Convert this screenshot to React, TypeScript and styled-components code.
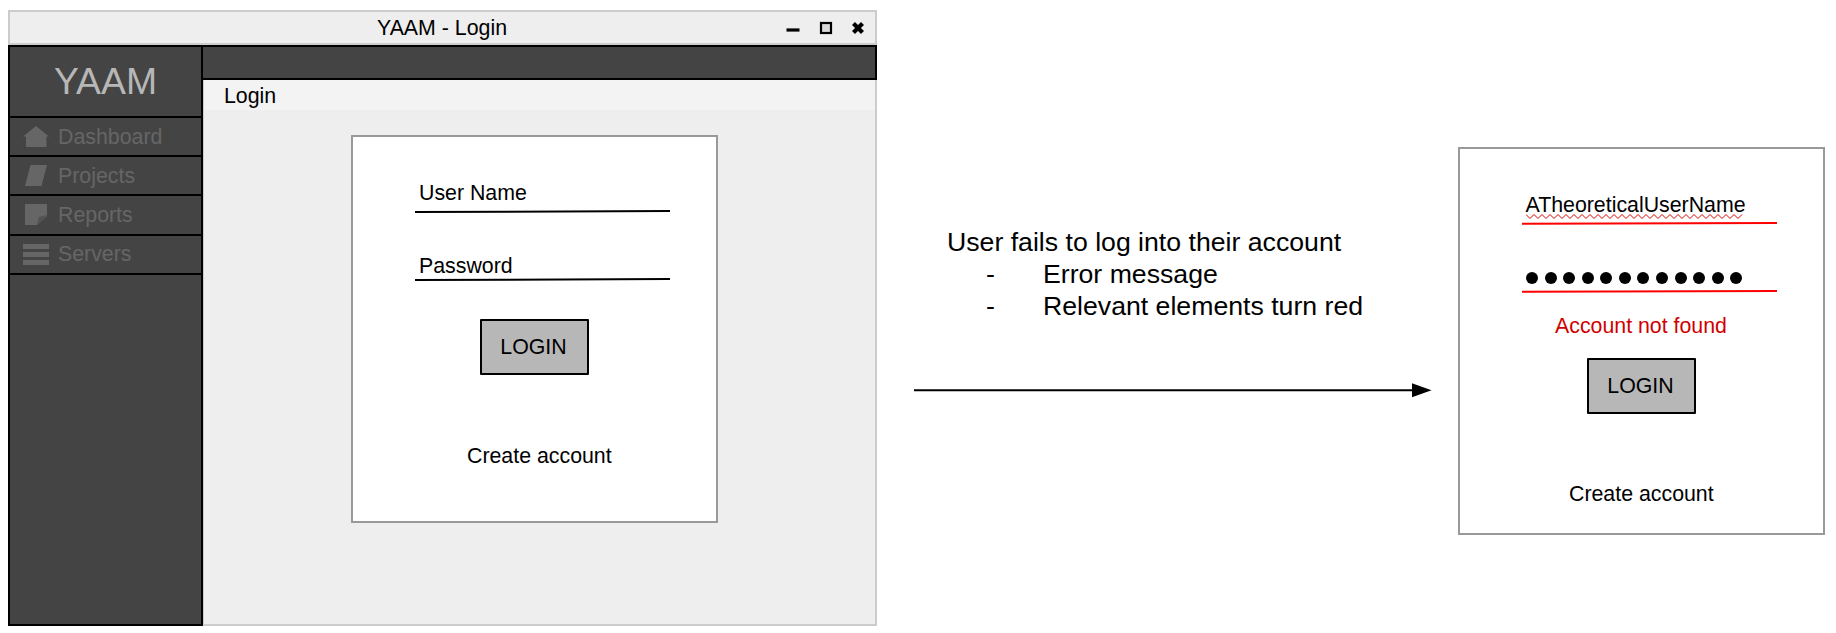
import React from "react";
import styled, { createGlobalStyle } from "styled-components";

const Global = createGlobalStyle`
  * { box-sizing: border-box; }
  body { margin: 0; background: #fff; font-family: "Liberation Sans", Arial, sans-serif; color: #000; }
`;

const Board = styled.main`
  display: flex;
  align-items: flex-start;
  width: 1836px;
  height: 633px;
  padding-left: 8px;
  overflow: hidden;
  font-size: 21.33px;
  line-height: 24px;
`;

const Window = styled.section`
  display: flex;
  flex-direction: column;
  width: 869px;
  height: 616px;
  margin-top: 10px;
`;

const TitleBar = styled.header`
  display: flex;
  align-items: center;
  height: 35px;
  border: 2px solid #ccc;
  background: #eee;
`;

const WindowTitle = styled.div`
  padding: 1px 0 0 367px;
  width: 776px;
  white-space: nowrap;
`;

const WindowBody = styled.div`
  display: flex;
  flex: 1;
`;

const Sidebar = styled.nav`
  width: 195px;
  border: 2px solid #000;
  background: #444;
`;

const Brand = styled.div`
  height: 69px;
  padding-top: 13px;
  text-align: center;
  font-size: 37.33px;
  line-height: 43px;
  color: #b7b7b7;
`;

const NavItem = styled.a`
  display: flex;
  align-items: center;
  gap: 9px;
  height: 39.2px;
  padding-left: 13px;
  border-top: 2px solid #000;
  color: #666;
  &:last-child { height: 41px; border-bottom: 2px solid #000; }
`;

const Main = styled.div`
  display: flex;
  flex-direction: column;
  flex: 1;
`;

const TopBar = styled.div`
  height: 35px;
  border: solid #000;
  border-width: 2px 2px 2px 0;
  background: #444;
`;

const Content = styled.div`
  flex: 1;
  border: solid #ccc;
  border-width: 0 2px 2px 1px;
  background: #eee;
`;

const PageHeader = styled.div`
  height: 30px;
  padding: 4px 0 0 20px;
  background: #f3f3f3;
`;

const Card = styled.div`
  display: flex;
  flex-direction: column;
  width: 367px;
  height: 388px;
  border: 2px solid #999;
  background: #fff;
`;

const WindowCard = styled(Card)`
  margin: 25px 0 0 147px;
`;

const Field = styled.div<{ $h: number }>`
  display: flex;
  flex-direction: column;
  justify-content: flex-end;
  height: ${(p) => p.$h}px;
  padding-left: 62px;
`;

const FieldText = styled.div<{ $gap: number }>`
  align-self: flex-start;
  margin: 0 0 ${(p) => p.$gap}px 4px;
`;

const UserValue = styled(FieldText)`
  display: flex;
  flex-direction: column;
  margin-left: 3.5px;
  svg { margin-top: -3px; }
`;

const Dots = styled(FieldText)`
  display: flex;
  gap: 6.59px;
  i { width: 12px; height: 12px; border-radius: 50%; background: #000; }
`;

const ErrorText = styled.div`
  height: 65px;
  padding: 21px 0 0 95px;
  color: #d00000;
`;

const LoginButton = styled.div<{ $top: number }>`
  display: flex;
  align-items: center;
  justify-content: center;
  width: 109px;
  height: 56px;
  margin: ${(p) => p.$top}px 0 0 127px;
  padding-right: 2px;
  border: 2px solid #000;
  border-radius: 1px;
  background: #b7b7b7;
`;

const CreateLink = styled.div<{ $top: number; $left: number }>`
  margin: ${(p) => p.$top}px 0 0 ${(p) => p.$left}px;
`;

const Transition = styled.section`
  width: 581px;
  padding: 226px 0 0 37px;
`;

const Note = styled.div`
  padding-left: 33px;
  font-size: 26.67px;
  line-height: 32px;
  white-space: nowrap;
`;

const NoteItem = styled.div`
  display: flex;
  padding-left: 39px;
  span { width: 57px; }
`;

const Arrow = styled.svg`
  display: block;
  margin-top: 60px;
`;

const ErrorCard = styled(Card)`
  margin-top: 147px;
`;

const Underline = ({ color = "#000", y = 2 }: { color?: string; y?: number }) => (
  <svg width="255" height="3" viewBox="0 0 255 3">
    <path d={`M0 ${y}L255 1`} stroke={color} strokeWidth="2" />
  </svg>
);

const icons: Record<string, React.ReactNode> = {
  Dashboard: <path d="M0 11.5L13 1L26 11.5H23.5V22H3V11.5Z" />,
  Projects: <path d="M7.5 1H24L18.5 22H2Z" />,
  Reports: <><path d="M2 1H24V13L14 22H2Z" /><path d="M14 22L16 14L24 12Z" fill="#525252" /></>,
  Servers: <path d="M0 1H26V6H0ZM0 9H26V14H0ZM0 17H26V22H0Z" />,
};

const squiggle =
  "M0 0.5" + Array.from({ length: 54 }, (_, i) => `L${(i + 1) * 4} ${i % 2 ? 0.5 : 4.5}`).join("");

export default function App() {
  return (
    <>
      <Global />
      <Board>
        <Window>
          <TitleBar>
            <WindowTitle>YAAM - Login</WindowTitle>
            <svg width="80" height="21" viewBox="0 0 80 21">
              <path d="M0.5 13H13.5" stroke="#000" strokeWidth="3.2" />
              <rect x="35" y="6" width="10" height="10" fill="#d9d9d9" stroke="#000" strokeWidth="2.2" />
              <path d="M67.5 6.5L76.5 15.5M76.5 6.5L67.5 15.5" stroke="#000" strokeWidth="4.2" />
            </svg>
          </TitleBar>
          <WindowBody>
            <Sidebar>
              <Brand>YAAM</Brand>
              {Object.keys(icons).map((name) => (
                <NavItem key={name}>
                  <svg width="26" height="23" fill="#666">{icons[name]}</svg>
                  {name}
                </NavItem>
              ))}
            </Sidebar>
            <Main>
              <TopBar />
              <Content>
                <PageHeader>Login</PageHeader>
                <WindowCard>
                  <Field $h={76}>
                    <FieldText $gap={5}>User Name</FieldText>
                    <Underline />
                  </Field>
                  <Field $h={68}>
                    <FieldText $gap={0}>Password</FieldText>
                    <Underline />
                  </Field>
                  <LoginButton $top={38}>LOGIN</LoginButton>
                  <CreateLink $top={69} $left={114}>Create account</CreateLink>
                </WindowCard>
              </Content>
            </Main>
          </WindowBody>
        </Window>
        <Transition>
          <Note>
            User fails to log into their account
            <NoteItem><span>-</span>Error message</NoteItem>
            <NoteItem><span>-</span>Relevant elements turn red</NoteItem>
          </Note>
          <Arrow width="520" height="17" viewBox="0 0 520 17">
            <path d="M0 8.3H500" stroke="#000" strokeWidth="2" />
            <path d="M498 1.3L517.5 8.3L498 15.3Z" />
          </Arrow>
        </Transition>
        <ErrorCard>
          <Field $h={76}>
            <UserValue $gap={3}>
              ATheoreticalUserName
              <svg width="219" height="5"><path d={squiggle} fill="none" stroke="#d00" /></svg>
            </UserValue>
            <Underline color="#f00" y={1.7} />
          </Field>
          <Field $h={68}>
            <Dots $gap={6}>{Array.from({ length: 12 }, (_, i) => <i key={i} />)}</Dots>
            <Underline color="#f00" y={1.7} />
          </Field>
          <ErrorText>Account not found</ErrorText>
          <LoginButton $top={0}>LOGIN</LoginButton>
          <CreateLink $top={68} $left={109}>Create account</CreateLink>
        </ErrorCard>
      </Board>
    </>
  );
}
